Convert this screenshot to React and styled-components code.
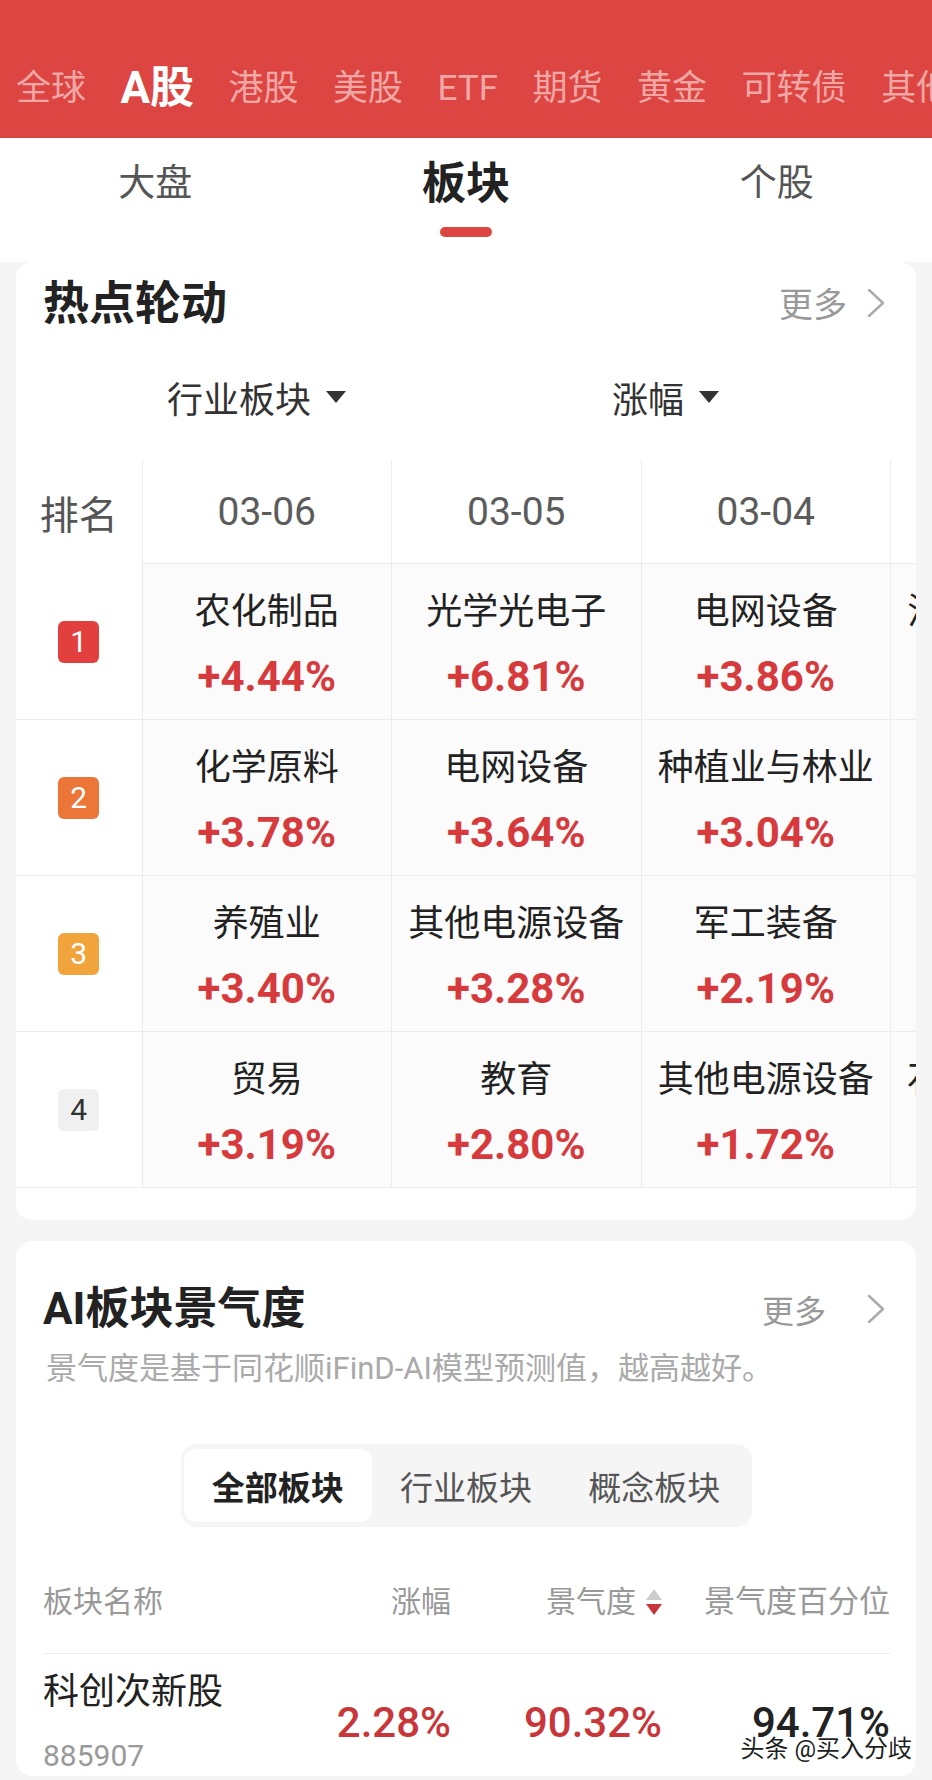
import React from 'react'
import styled, { createGlobalStyle } from 'styled-components'

const RED = '#dc4541'

const GlobalStyle = createGlobalStyle`
  body {
    margin: 0;
    background: #f5f5f5;
    font-family: Roboto, "Noto Sans CJK SC", sans-serif;
  }
`

const Page = styled.div`
  position: relative;
  width: 932px;
  height: 1780px;
  overflow: hidden;
  background: #f5f5f5;
`

const TopBar = styled.div`
  box-sizing: border-box;
  height: 138px;
  padding: 38px 0 0 16px;
  display: flex;
  align-items: center;
  gap: 34.5px;
  background: ${RED};
  white-space: nowrap;
`

const MarketTab = styled.span`
  flex-shrink: 0;
  line-height: 1;
  font-size: ${p => (p.$active ? 44 : 35)}px;
  font-weight: ${p => (p.$active ? 700 : 400)};
  color: ${p => (p.$active ? '#fff' : 'rgba(255,255,255,0.55)')};
`

const SubTabs = styled.div`
  height: 124px;
  display: grid;
  grid-template-columns: repeat(3, 1fr);
  background: #fff;
`

const SubTab = styled.div`
  display: flex;
  flex-direction: column;
  align-items: center;
  padding-top: 24px;
`

const SubLabel = styled.span`
  height: 44px;
  line-height: 44px;
  font-size: ${p => (p.$active ? 44 : 37)}px;
  font-weight: ${p => (p.$active ? 700 : 400)};
  color: ${p => (p.$active ? '#222' : '#555')};
`

const Indicator = styled.div`
  width: 52px;
  height: 10px;
  margin-top: 21px;
  border-radius: 5px;
  background: ${RED};
`

const Card = styled.section`
  margin: ${p => p.$gap || 0}px 16px 0;
  padding-bottom: ${p => p.$bottom || 0}px;
  border-radius: 16px;
  background: #fff;
  overflow: hidden;
`

const CardHead = styled.div`
  display: flex;
  align-items: center;
  justify-content: space-between;
  height: 81px;
  margin-top: ${p => p.$top || 0}px;
  padding: 0 29px 0 27px;
`

const CardTitle = styled.h2`
  margin: 0;
  line-height: 1;
  font-size: ${p => p.$size || 46}px;
  font-weight: 700;
  color: #222;
`

const More = styled.div`
  display: flex;
  align-items: center;
  gap: ${p => p.$gap}px;
  font-size: ${p => p.$size}px;
  color: #999;
`

const FilterRow = styled.div`
  height: 108px;
  padding: 0 46px 0 36px;
  display: grid;
  grid-template-columns: 1fr 1fr;
  align-items: center;
`

const Filter = styled.div`
  justify-self: center;
  display: flex;
  align-items: center;
  gap: 15px;
  font-size: 36px;
  color: #333;
`

const RankTable = styled.div`
  margin-top: 9px;
`

const TableRow = styled.div`
  display: grid;
  grid-template-columns: 125.5px repeat(4, 249.5px);
  height: ${p => p.$h}px;
`

const RankHead = styled.div`
  display: flex;
  align-items: center;
  justify-content: center;
  font-size: 39px;
  color: #555;
`

const DateHead = styled.div`
  display: flex;
  align-items: center;
  justify-content: center;
  border-left: 1px solid #ececec;
  border-bottom: 1px solid #ececec;
  font-size: 39px;
  color: #5c5c5c;
`

const RankCell = styled.div`
  display: flex;
  align-items: center;
  justify-content: center;
  border-bottom: 1px solid #ececec;
`

const Badge = styled.span`
  width: 41px;
  height: 42px;
  display: flex;
  align-items: center;
  justify-content: center;
  border-radius: 6px;
  background: ${p => p.$bg};
  color: ${p => p.$fg};
  font-size: 30px;
`

const DataCell = styled.div`
  box-sizing: border-box;
  display: flex;
  flex-direction: column;
  align-items: center;
  justify-content: center;
  gap: 15px;
  padding-top: 5px;
  border-left: 1px solid #ececec;
  border-bottom: 1px solid #ececec;
  background: #fbfbfb;
  white-space: nowrap;
`

const SectorName = styled.span`
  line-height: 50px;
  font-size: 36px;
  color: #222;
`

const Change = styled.span`
  line-height: 50px;
  font-size: 42px;
  font-weight: 700;
  color: #d63a3d;
`

const Note = styled.p`
  margin: 0;
  padding: 0 27px 0 30px;
  line-height: 40px;
  font-size: 31px;
  color: #aaa;
`

const Segments = styled.div`
  box-sizing: border-box;
  width: 571px;
  height: 83px;
  margin: 55px auto 0;
  padding: 5px 3px;
  display: grid;
  grid-template-columns: repeat(3, 1fr);
  border-radius: 16px;
  background: #f5f5f5;
`

const Segment = styled.div`
  display: flex;
  align-items: center;
  justify-content: center;
  border-radius: 12px;
  background: ${p => (p.$active ? '#fff' : 'transparent')};
  font-size: 33px;
  font-weight: ${p => (p.$active ? 700 : 400)};
  color: ${p => (p.$active ? '#222' : '#555')};
`

const ScoreGrid = styled.div`
  display: grid;
  grid-template-columns: 1fr 150px 211px 228px;
  align-items: center;
  margin: 0 26px 0 27px;
`

const ScoreHead = styled(ScoreGrid)`
  margin-top: 55px;
  padding-bottom: 31px;
  border-bottom: 1px solid #eee;
  line-height: 40px;
  font-size: 30px;
  color: #999;
`

const HeadCell = styled.div`
  display: flex;
  align-items: center;
  justify-content: ${p => (p.$left ? 'flex-start' : 'flex-end')};
  gap: 10px;
  font-size: ${p => p.$size || 30}px;
`

const ScoreRow = styled(ScoreGrid)`
  padding-top: 14px;
`

const NameBlock = styled.div`
  display: flex;
  flex-direction: column;
`

const RowName = styled.span`
  line-height: 48px;
  font-size: 36px;
  color: #222;
`

const Code = styled.span`
  margin-top: 20px;
  line-height: 40px;
  font-size: 30px;
  color: #999;
`

const Value = styled.span`
  text-align: right;
  font-size: 42px;
  font-weight: 500;
  color: ${p => p.$color};
`

const Watermark = styled.div`
  position: absolute;
  right: 20px;
  bottom: 16px;
  font-size: 24px;
  color: #1e1e1e;
  text-shadow: 0 0 2px #fff, 1px 1px 0 #fff, -1px -1px 0 #fff, 1px -1px 0 #fff, -1px 1px 0 #fff;
`

const Chevron = () => (
  <svg width="22" height="30" viewBox="0 0 22 30" fill="none">
    <polyline points="4,2 18,15 4,28" stroke="#aaa" strokeWidth="2.4" strokeLinecap="round" strokeLinejoin="round" />
  </svg>
)

const Caret = () => (
  <svg width="20" height="12" viewBox="0 0 20 12">
    <polygon points="0,0 20,0 10,12" fill="#333" />
  </svg>
)

const SortIcon = () => (
  <svg width="16" height="27" viewBox="0 0 16 27">
    <polygon points="8,0 16,11 0,11" fill="#ccc" />
    <polygon points="0,15 16,15 8,26" fill="#c9363a" />
  </svg>
)

const markets = ['全球', 'A股', '港股', '美股', 'ETF', '期货', '黄金', '可转债', '其他']
const dates = ['03-06', '03-05', '03-04', '03-03']
const badges = [
  { bg: '#e2403f', fg: '#fff' },
  { bg: '#eb7638', fg: '#fff' },
  { bg: '#f1a33c', fg: '#fff' },
  { bg: '#f0f0f0', fg: '#333' },
]
const ranking = [
  [['农化制品', '+4.44%'], ['光学光电子', '+6.81%'], ['电网设备', '+3.86%'], ['消费电子零件', '+1.65%']],
  [['化学原料', '+3.78%'], ['电网设备', '+3.64%'], ['种植业与林业', '+3.04%'], ['半导体', '+1.42%']],
  [['养殖业', '+3.40%'], ['其他电源设备', '+3.28%'], ['军工装备', '+2.19%'], ['通信设备', '+1.20%']],
  [['贸易', '+3.19%'], ['教育', '+2.80%'], ['其他电源设备', '+1.72%'], ['石油加工贸易', '+1.08%']],
]

const App = () => {
  return (
    <Page>
      <GlobalStyle />

      <TopBar>
        {markets.map(m => (
          <MarketTab key={m} $active={m === 'A股'}>{m}</MarketTab>
        ))}
      </TopBar>

      <SubTabs>
        {['大盘', '板块', '个股'].map(t => (
          <SubTab key={t}>
            <SubLabel $active={t === '板块'}>{t}</SubLabel>
            {t === '板块' && <Indicator />}
          </SubTab>
        ))}
      </SubTabs>

      <Card $bottom={32}>
        <CardHead>
          <CardTitle>热点轮动</CardTitle>
          <More $gap={18} $size={34}>更多<Chevron /></More>
        </CardHead>

        <FilterRow>
          <Filter>行业板块<Caret /></Filter>
          <Filter>涨幅<Caret /></Filter>
        </FilterRow>

        <RankTable>
          <TableRow $h={104}>
            <RankHead>排名</RankHead>
            {dates.map(d => <DateHead key={d}>{d}</DateHead>)}
          </TableRow>
          {ranking.map((row, i) => (
            <TableRow key={i} $h={156}>
              <RankCell>
                <Badge $bg={badges[i].bg} $fg={badges[i].fg}>{i + 1}</Badge>
              </RankCell>
              {row.map(([name, pct], j) => (
                <DataCell key={j}>
                  <SectorName>{name}</SectorName>
                  <Change>{pct}</Change>
                </DataCell>
              ))}
            </TableRow>
          ))}
        </RankTable>
      </Card>

      <Card $gap={21}>
        <CardHead $top={27}>
          <CardTitle $size={44}>AI板块景气度</CardTitle>
          <More $gap={39} $size={32}>更多<Chevron /></More>
        </CardHead>
        <Note>景气度是基于同花顺iFinD-AI模型预测值，越高越好。</Note>

        <Segments>
          <Segment $active>全部板块</Segment>
          <Segment>行业板块</Segment>
          <Segment>概念板块</Segment>
        </Segments>

        <ScoreHead>
          <HeadCell $left>板块名称</HeadCell>
          <HeadCell>涨幅</HeadCell>
          <HeadCell>景气度<SortIcon /></HeadCell>
          <HeadCell $size={31}>景气度百分位</HeadCell>
        </ScoreHead>

        <ScoreRow>
          <NameBlock>
            <RowName>科创次新股</RowName>
            <Code>885907</Code>
          </NameBlock>
          <Value $color="#c9363a">2.28%</Value>
          <Value $color="#c9363a">90.32%</Value>
          <Value $color="#222">94.71%</Value>
        </ScoreRow>
      </Card>

      <Watermark>头条 @买入分歧</Watermark>
    </Page>
  )
}

export default App
